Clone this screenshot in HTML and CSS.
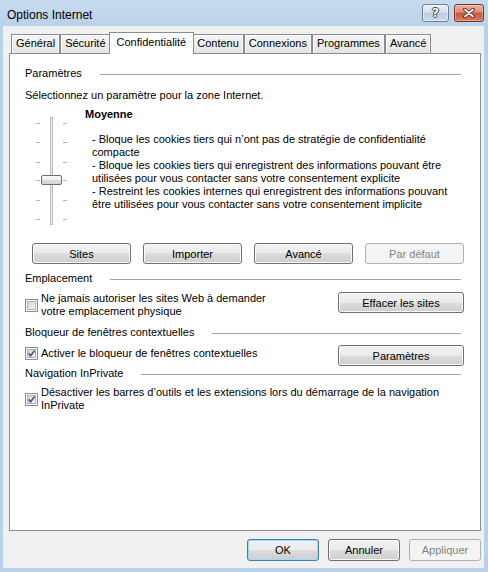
FILE: index.html
```html
<!DOCTYPE html>
<html lang="fr">
<head>
  <meta charset="UTF-8" />
  <title>Options Internet</title>
  <link rel="stylesheet" href="styles.css">
</head>
<body>
  <svg class="defs" width="0" height="0">
    <defs>
      <linearGradient id="boxFill" x1="0" y1="0" x2="1" y2="1">
        <stop offset="0" stop-color="#cdd1d6"/>
        <stop offset="1" stop-color="#f7f7f7"/>
      </linearGradient>
      <linearGradient id="thumbFill" x1="0" y1="0" x2="0" y2="1">
        <stop offset="0" stop-color="#fbfbfb"/>
        <stop offset="0.5" stop-color="#eeeeee"/>
        <stop offset="0.5" stop-color="#dedede"/>
        <stop offset="1" stop-color="#d2d2d2"/>
      </linearGradient>
    </defs>
  </svg>

  <div class="window">
    <div class="titlebar">
      <span class="title">Options Internet</span>
      <div class="caption-btns">
        <span class="cap-btn help">?</span>
        <span class="cap-btn close">
          <svg width="14" height="10" viewBox="0 0 14 10">
            <path d="M3 1.5 L11 8.5 M11 1.5 L3 8.5" stroke="#5a1d14" stroke-width="3.6" stroke-linecap="round" fill="none"/>
            <path d="M3 1.5 L11 8.5 M11 1.5 L3 8.5" stroke="#fff" stroke-width="1.8" stroke-linecap="round" fill="none"/>
          </svg>
        </span>
      </div>
    </div>

    <div class="client">
      <div class="tabs">
        <div class="tab">Général</div>
        <div class="tab">Sécurité</div>
        <div class="tab active">Confidentialité</div>
        <div class="tab">Contenu</div>
        <div class="tab">Connexions</div>
        <div class="tab">Programmes</div>
        <div class="tab">Avancé</div>
      </div>

      <div class="panel">
        <div class="group">Paramètres</div>
        <p class="intro">Sélectionnez un paramètre pour la zone Internet.</p>

        <div class="privacy">
          <svg class="slider" width="33" height="108" viewBox="0 0 33 108">
            <g stroke="#b4b4b4" stroke-width="1">
              <path d="M0 6.5h4M0 25.5h4M0 45.5h4M0 63.5h4M0 83.5h4M0 102.5h4"/>
              <path d="M27 6.5h4M27 25.5h4M27 45.5h4M27 63.5h4M27 83.5h4M27 102.5h4"/>
            </g>
            <rect x="14.5" y="0.5" width="2" height="107" fill="#e8e8e8" stroke="#bdbdbd"/>
            <rect x="5.5" y="58.5" width="20" height="9" rx="1.5" fill="url(#thumbFill)" stroke="#6f6f6f"/>
          </svg>
          <div class="level">
            <div class="level-name">Moyenne</div>
            <div class="level-desc">- Bloque les cookies tiers qui n’ont pas de stratégie de confidentialité<br>compacte<br>- Bloque les cookies tiers qui enregistrent des informations pouvant être<br>utilisées pour vous contacter sans votre consentement explicite<br>- Restreint les cookies internes qui enregistrent des informations pouvant<br>être utilisées pour vous contacter sans votre consentement implicite</div>
          </div>
        </div>

        <div class="btn-row">
          <button class="btn">Sites</button>
          <button class="btn">Importer</button>
          <button class="btn">Avancé</button>
          <button class="btn" disabled>Par défaut</button>
        </div>

        <div class="group spaced">Emplacement</div>
        <div class="option-row">
          <label class="check">
            <svg class="box" width="13" height="13" viewBox="0 0 13 13">
              <rect x="0.5" y="0.5" width="12" height="12" fill="#f4f4f4" stroke="#8e8f8f"/>
              <rect x="2.5" y="2.5" width="8" height="8" fill="url(#boxFill)" stroke="#b3b7bc"/>
            </svg>
            <span>Ne jamais autoriser les sites Web à demander<br>votre emplacement physique</span>
          </label>
          <button class="btn wide">Effacer les sites</button>
        </div>

        <div class="group spaced">Bloqueur de fenêtres contextuelles</div>
        <div class="option-row tight">
          <label class="check offset">
            <svg class="box" width="13" height="13" viewBox="0 0 13 13">
              <rect x="0.5" y="0.5" width="12" height="12" fill="#f4f4f4" stroke="#8e8f8f"/>
              <rect x="2.5" y="2.5" width="8" height="8" fill="url(#boxFill)" stroke="#b3b7bc"/>
              <path d="M3.6 6.4 L5.6 8.8 L9.6 3.4" stroke="#4a5f97" stroke-width="1.7" fill="none"/>
            </svg>
            <span>Activer le bloqueur de fenêtres contextuelles</span>
          </label>
          <button class="btn wide">Paramètres</button>
        </div>

        <div class="group near">Navigation InPrivate</div>
        <div class="option-row tight">
          <label class="check">
            <svg class="box" width="13" height="13" viewBox="0 0 13 13">
              <rect x="0.5" y="0.5" width="12" height="12" fill="#f4f4f4" stroke="#8e8f8f"/>
              <rect x="2.5" y="2.5" width="8" height="8" fill="url(#boxFill)" stroke="#b3b7bc"/>
              <path d="M3.6 6.4 L5.6 8.8 L9.6 3.4" stroke="#4a5f97" stroke-width="1.7" fill="none"/>
            </svg>
            <span>Désactiver les barres d’outils et les extensions lors du démarrage de la navigation<br>InPrivate</span>
          </label>
        </div>
      </div>

      <div class="dialog-btns">
        <button class="btn small default">OK</button>
        <button class="btn small">Annuler</button>
        <button class="btn small" disabled>Appliquer</button>
      </div>
    </div>
  </div>
</body>
</html>
```

FILE: styles.css
```css
body {
  margin: 0;
  font-family: "Liberation Sans", Arial, sans-serif;
  font-size: 11px;
  color: #000;
  background: #fff;
}

.defs {
  display: block;
}

.window {
  width: 488px;
  height: 572px;
  background: #b9d1ea;
  display: flex;
  flex-direction: column;
}

/* title bar */

.titlebar {
  height: 26px;
  flex: none;
  display: flex;
  justify-content: space-between;
  align-items: flex-start;
  padding: 0 4px 0 7px;
  background: linear-gradient(#c7dbef, #b9d1ea);
}

.title {
  font-size: 12px;
  line-height: 13px;
  margin-top: 9px;
}

.caption-btns {
  display: flex;
  gap: 5px;
  margin-top: 4px;
}

.cap-btn {
  height: 18px;
  box-sizing: border-box;
  border-radius: 3px;
  display: flex;
  align-items: center;
  justify-content: center;
}

.help {
  width: 27px;
  border: 1px solid #6d7f96;
  background: linear-gradient(#eaf1f8, #d3dfec 45%, #bccde2 50%, #cbd9ea);
  box-shadow: inset 0 0 0 1px rgba(255, 255, 255, 0.5);
  color: #fff;
  font-family: "DejaVu Sans", sans-serif;
  font-weight: bold;
  font-size: 12px;
  line-height: 12px;
  text-shadow: 1px 0 #444, -1px 0 #444, 0 1px #444, 0 -1px #444;
}

.close {
  width: 30px;
  border: 1px solid #7d3124;
  background: linear-gradient(#eab2a5, #dc8c7b 45%, #c8553f 50%, #d57b63);
  box-shadow: inset 0 0 0 1px rgba(255, 255, 255, 0.3);
}

/* client area */

.client {
  flex: 1;
  margin: 0 4px 4px 3px;
  padding: 6px 3px 0 6px;
  background: #f0f0f0;
  display: flex;
  flex-direction: column;
}

.tabs {
  display: flex;
  align-items: flex-end;
  height: 21px;
  padding-left: 2px;
  position: relative;
  z-index: 1;
}

.tab {
  height: 19px;
  box-sizing: border-box;
  padding: 0 4px;
  border: 1px solid #898c95;
  border-bottom: none;
  background: linear-gradient(#f5f5f5, #e4e4e4);
  box-shadow: inset 1px 1px 0 #fff, inset -1px 0 0 #fafafa;
  line-height: 17px;
}

.tab.active {
  height: 22px;
  margin: 0 -2px -1px;
  padding: 0 7px;
  background: #fff;
  box-shadow: none;
  line-height: 19px;
  position: relative;
  z-index: 2;
}

.panel {
  height: 478px;
  box-sizing: border-box;
  border: 1px solid #898c95;
  background: #fff;
  padding: 13px 16px 0 15px;
}

.group {
  display: flex;
  align-items: center;
  line-height: 13px;
}

.group::after {
  content: "";
  flex: 1;
  border-top: 1px solid #a3a3a3;
  margin: 1px 3px 0 18px;
}

.group.spaced {
  margin-top: 8px;
}

.group.near {
  margin-top: 1px;
}

.intro {
  margin: 9px 0 0;
  line-height: 13px;
}

.privacy {
  display: flex;
  margin-top: 6px;
}

.slider {
  flex: none;
  margin: 9px 16px 0 11px;
}

.level-name {
  font-weight: bold;
  line-height: 13px;
}

.level-desc {
  margin-top: 12px;
  padding-left: 7px;
  line-height: 13px;
  white-space: nowrap;
}

/* buttons */

.btn {
  width: 99px;
  height: 21px;
  box-sizing: border-box;
  padding: 0;
  border: 1px solid #707070;
  border-radius: 3px;
  background: linear-gradient(#f2f2f2, #ebebeb 50%, #dddddd 50%, #cfcfcf);
  box-shadow: inset 0 0 0 1px #fbfbfb;
  font: inherit;
  color: #000;
}

.btn:disabled {
  border-color: #adb2b5;
  background: #f4f4f4;
  box-shadow: none;
  color: #838383;
}

.btn.wide {
  width: 126px;
}

.btn.small {
  width: 72px;
  height: 22px;
}

.btn.default {
  border-color: #3c7fb1;
  box-shadow: inset 0 0 0 1px #98dcf8;
}

.btn-row {
  display: flex;
  gap: 12px;
  margin: 18px 0 0 7px;
}

/* check boxes */

.option-row {
  display: flex;
  align-items: flex-start;
  justify-content: space-between;
  margin-top: 7px;
}

.option-row.tight {
  margin-top: 6px;
}

.check {
  display: flex;
  align-items: center;
  gap: 3px;
  line-height: 13px;
  white-space: nowrap;
}

.check.offset {
  margin-top: 2px;
}

.box {
  flex: none;
}

.dialog-btns {
  display: flex;
  justify-content: flex-end;
  gap: 9px;
  margin-top: 8px;
}
```
